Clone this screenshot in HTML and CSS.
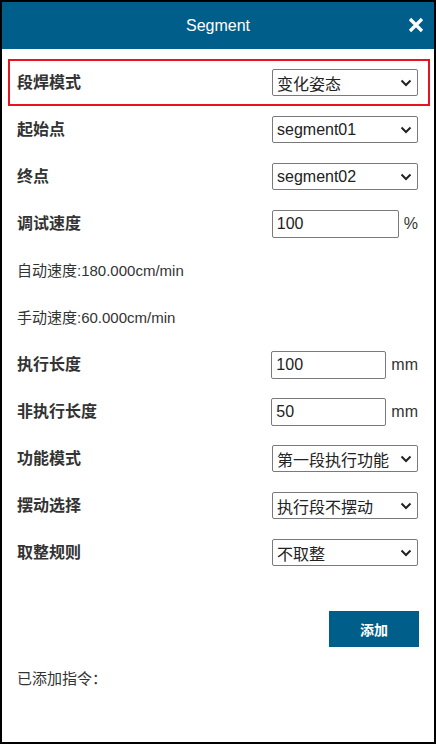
FILE: index.html
```html
<!DOCTYPE html>
<html lang="zh">
<head>
<meta charset="utf-8">
<link rel="stylesheet" href="styles.css">
</head>
<body>
<div class="dialog">
  <div class="header">
    <span class="title">Segment</span>
    <svg class="close" width="16" height="16" viewBox="0 0 16 16"><path d="M2 2 L14 14 M14 2 L2 14" stroke="#fff" stroke-width="3.2" stroke-linecap="butt"/></svg>
  </div>
  <div class="form">
    <div class="row highlight">
      <span class="label">段焊模式</span>
      <div class="select"><span>变化姿态</span><svg class="chev" width="12" height="8" viewBox="0 0 12 8"><path d="M1.5 1.5 L6 6 L10.5 1.5" fill="none" stroke="#222" stroke-width="2"/></svg></div>
    </div>
    <div class="row">
      <span class="label">起始点</span>
      <div class="select"><span>segment01</span><svg class="chev" width="12" height="8" viewBox="0 0 12 8"><path d="M1.5 1.5 L6 6 L10.5 1.5" fill="none" stroke="#222" stroke-width="2"/></svg></div>
    </div>
    <div class="row">
      <span class="label">终点</span>
      <div class="select"><span>segment02</span><svg class="chev" width="12" height="8" viewBox="0 0 12 8"><path d="M1.5 1.5 L6 6 L10.5 1.5" fill="none" stroke="#222" stroke-width="2"/></svg></div>
    </div>
    <div class="row">
      <span class="label">调试速度</span>
      <div class="group"><div class="input wide">100</div><span class="unit">%</span></div>
    </div>
    <div class="row">
      <span class="info">自动速度:180.000cm/min</span>
    </div>
    <div class="row">
      <span class="info">手动速度:60.000cm/min</span>
    </div>
    <div class="row">
      <span class="label">执行长度</span>
      <div class="group"><div class="input">100</div><span class="unit">mm</span></div>
    </div>
    <div class="row">
      <span class="label">非执行长度</span>
      <div class="group"><div class="input">50</div><span class="unit">mm</span></div>
    </div>
    <div class="row">
      <span class="label">功能模式</span>
      <div class="select"><span>第一段执行功能</span><svg class="chev" width="12" height="8" viewBox="0 0 12 8"><path d="M1.5 1.5 L6 6 L10.5 1.5" fill="none" stroke="#222" stroke-width="2"/></svg></div>
    </div>
    <div class="row">
      <span class="label">摆动选择</span>
      <div class="select"><span>执行段不摆动</span><svg class="chev" width="12" height="8" viewBox="0 0 12 8"><path d="M1.5 1.5 L6 6 L10.5 1.5" fill="none" stroke="#222" stroke-width="2"/></svg></div>
    </div>
    <div class="row">
      <span class="label">取整规则</span>
      <div class="select"><span>不取整</span><svg class="chev" width="12" height="8" viewBox="0 0 12 8"><path d="M1.5 1.5 L6 6 L10.5 1.5" fill="none" stroke="#222" stroke-width="2"/></svg></div>
    </div>
  </div>
  <div class="actions">
    <button class="add">添加</button>
  </div>
  <div class="added">已添加指令：</div>
</div>
</body>
</html>
```
FILE: styles.css
```css
* { box-sizing: border-box; }
html, body { margin: 0; padding: 0; background: #fff; }
body { font-family: "Liberation Sans", "Noto Sans CJK SC", sans-serif; color: #333; }
.dialog {
  width: 436px;
  height: 744px;
  border: 2px solid #000;
  background: #fff;
}
.header {
  height: 47px;
  background: #005e8a;
  display: flex;
  align-items: center;
  justify-content: center;
  position: relative;
}
.title { color: #fff; font-size: 16px; }
.close { position: absolute; right: 10px; top: 15px; }
.form { padding-top: 10px; }
.row {
  height: 47px;
  margin: 0 4px 0 6px;
  border: 2px solid transparent;
  padding: 0 10px 0 7px;
  display: flex;
  align-items: center;
  justify-content: space-between;
}
.row.highlight { border-color: #e8131f; }
.label { font-size: 16px; font-weight: bold; color: #333; margin-top: -3px; }
.info { font-size: 15px; color: #333; margin-top: -2px; }
.select {
  width: 146px;
  height: 27px;
  border: 1px solid #7a7a7a;
  border-radius: 2px;
  display: flex;
  align-items: center;
  justify-content: space-between;
  padding: 0 5px 0 4px;
  font-size: 16px;
  color: #222;
  background: #fff;
}
.chev { flex: none; }
.group { display: flex; align-items: center; gap: 5px; }
.input {
  width: 115px;
  height: 28px;
  border: 1px solid #7a7a7a;
  border-radius: 2px;
  padding: 0 4px;
  display: flex;
  align-items: center;
  font-size: 16px;
  color: #222;
}
.input.wide { width: 127px; }
.unit { font-size: 16px; color: #333; }
.actions {
  display: flex;
  justify-content: flex-end;
  padding: 35px 15px 0 0;
}
.add {
  width: 90px;
  height: 36px;
  border: none;
  background: #005e8a;
  color: #fff;
  font-family: "Liberation Sans", "Noto Sans CJK SC", sans-serif;
  font-size: 14px;
  font-weight: bold;
  padding: 0;
}
.added { font-size: 15px; color: #333; padding: 20px 0 0 15px; }
```
